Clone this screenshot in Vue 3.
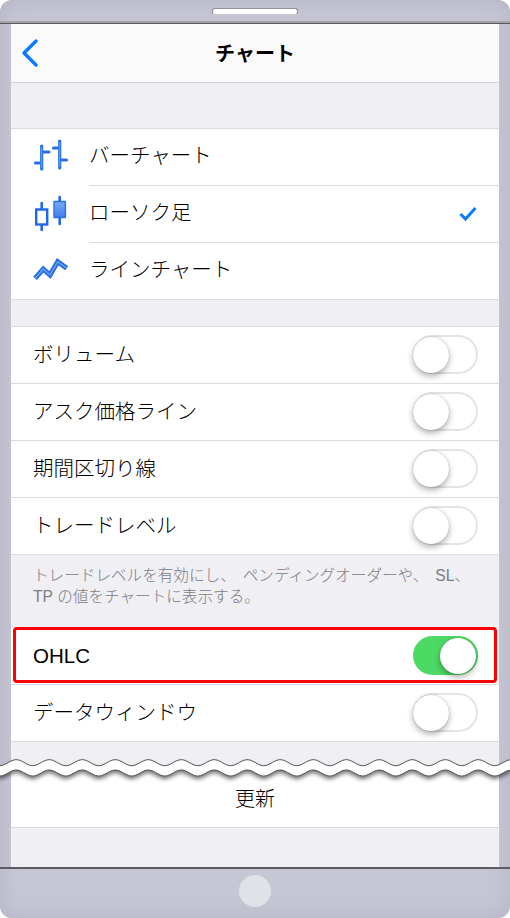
<script setup>
import { computed } from 'vue'

const chartTypes = [
  { label: 'バーチャート', icon: 'bar' },
  { label: 'ローソク足', icon: 'candle', checked: true },
  { label: 'ラインチャート', icon: 'line' }
]
const options = ['ボリューム', 'アスク価格ライン', '期間区切り線', 'トレードレベル']

const PERIOD = 33
const PHASE = 8
const AMP = 3
function samples(center) {
  const pts = []
  for (let x = -2; x <= 512; x += 1.5) {
    const y = center - AMP * Math.sin((2 * Math.PI * (x - PHASE)) / PERIOD)
    pts.push(`${x} ${y.toFixed(2)}`)
  }
  return pts
}
const upper = computed(() => 'M' + samples(7.7).join(' L'))
const lower = computed(() => 'M' + samples(18).join(' L'))
const band = computed(() => 'M' + samples(7.7).join(' L') + ' L' + samples(18).reverse().join(' L') + ' Z')
</script>

<template>
  <div class="device">
    <div class="bezel-top"><div class="speaker"></div></div>
    <div class="screen">
      <header class="nav">
        <svg class="back" width="18" height="28" viewBox="0 0 18 28">
          <path d="M15 2 L3 14 L15 26" fill="none" stroke="#0a7aff" stroke-width="3.4" stroke-linecap="round" stroke-linejoin="round" />
        </svg>
        <h1 class="title">チャート</h1>
      </header>

      <section class="group first">
        <div v-for="t in chartTypes" :key="t.label" class="row icon-row">
          <span class="icon">
            <svg width="40" height="40" viewBox="0 0 40 40">
              <defs>
                <linearGradient id="candleFill" x1="0" y1="0" x2="0" y2="1">
                  <stop offset="0" stop-color="#74aaf6" />
                  <stop offset="1" stop-color="#3f7fea" />
                </linearGradient>
              </defs>
              <template v-if="t.icon === 'bar'">
                <path d="M10.7 8V31M4.5 25H10.7M10.7 14H18M28.7 3V30M22.5 10H28.7M28.7 22H35.5" fill="none" stroke="#2a6ee4" stroke-width="3.2" stroke-linecap="round" />
                <path d="M10.7 9V30M28.7 4V29" fill="none" stroke="#6ba2f3" stroke-width="1" />
              </template>
              <template v-else-if="t.icon === 'candle'">
                <path d="M10.7 8V14M10.7 30V35M28.7 2V6M28.7 23V29" stroke="#1f66ea" stroke-width="2.6" stroke-linecap="round" />
                <rect x="5.2" y="14.5" width="11" height="15" fill="#fff" stroke="#1f66ea" stroke-width="2.4" />
                <rect x="23" y="6.5" width="11.4" height="16" rx="0.5" fill="url(#candleFill)" stroke="#2a6ee4" stroke-width="1.4" />
              </template>
              <template v-else>
                <path d="M4 27.3 L12.3 18 L19 24 L26.7 10.7 L35.7 17.3" fill="none" stroke="#2a6ee4" stroke-width="5" stroke-linejoin="miter" />
                <path d="M4 27.3 L12.3 18 L19 24 L26.7 10.7 L35.7 17.3" fill="none" stroke="#6ba2f3" stroke-width="1.4" stroke-linejoin="miter" />
              </template>
            </svg>
          </span>
          <span class="row-body">
            <span class="label">{{ t.label }}</span>
            <svg v-if="t.checked" class="check" width="18" height="15" viewBox="0 0 18 15">
              <path d="M1.5 8 L6.5 13 L16.5 2" fill="none" stroke="#0a7aff" stroke-width="3" />
            </svg>
          </span>
        </div>
      </section>

      <section class="group second">
        <div v-for="o in options" :key="o" class="row plain">
          <span class="label">{{ o }}</span>
          <span class="switch"><span class="knob"></span></span>
        </div>
      </section>

      <p class="note">トレードレベルを有効にし、<span class="gap">ペンディングオーダーや、</span><span class="gap"><span class="latin">SL</span>、</span><br /><span class="latin">TP</span> の値をチャートに表示する。</p>

      <section class="group">
        <div class="row plain">
          <span class="label latin">OHLC</span>
          <span class="switch on"><span class="knob"></span></span>
        </div>
        <div class="row plain">
          <span class="label">データウィンドウ</span>
          <span class="switch"><span class="knob"></span></span>
        </div>
      </section>

      <div class="spacer"></div>

      <section class="update"><span class="update-label">更新</span></section>
    </div>
    <div class="bezel-bottom"><div class="home"></div></div>

    <div class="highlight"></div>
    <svg class="tear" width="510" height="34" viewBox="0 0 510 34">
      <path :d="band" fill="#fff" class="band" />
      <path :d="upper" fill="none" stroke="#555" stroke-width="1" />
      <path :d="lower" fill="none" stroke="#555" stroke-width="1" />
    </svg>
  </div>
</template>

<style scoped>
.device {
  position: relative;
  width: 510px;
  height: 918px;
  overflow: hidden;
  display: flex;
  flex-direction: column;
  background: #c6c6d4;
  border-radius: 12px;
  box-shadow: inset 0 0 22px #b3b3c5;
  font-family: "Liberation Sans", "Noto Sans CJK JP", sans-serif;
  font-weight: 300;
  color: #000;
}
.latin { font-weight: 400; }
.bezel-top {
  flex: none;
  height: 24px;
  display: flex;
  justify-content: center;
  align-items: flex-start;
  padding-top: 8px;
  box-sizing: border-box;
  border-bottom: 1px solid #58585c;
  box-shadow: inset 0 -2px 0 #a2a2aa;
}
.speaker {
  width: 86px;
  height: 7px;
  box-sizing: border-box;
  background: #fff;
  border: 1px solid #8d8d92;
  border-bottom-color: #c8c8d0;
  border-radius: 3px;
}
.screen {
  flex: none;
  height: 843px;
  margin: 0 11px;
  background: #efeff4;
  display: flex;
  flex-direction: column;
}
.nav {
  flex: none;
  height: 59px;
  box-sizing: border-box;
  background: #fafafa;
  border-bottom: 1px solid #d2d2d6;
  display: flex;
  align-items: center;
  justify-content: center;
  position: relative;
}
.back {
  position: absolute;
  left: 10px;
  top: 15px;
}
.title {
  margin: 0 0 -2px;
  font-size: 20px;
  font-weight: 700;
  line-height: 1;
}
.group {
  flex: none;
  background: #fff;
  border-top: 1px solid #dcdce0;
}
.group.first { margin-top: 45px; }
.group.second { margin-top: 26px; }
.row {
  height: 57px;
  box-sizing: border-box;
}
.plain {
  display: flex;
  align-items: center;
  justify-content: space-between;
  padding: 0 21px 2px 22px;
  border-bottom: 1px solid #dcdce0;
}
.icon-row {
  display: flex;
  align-items: stretch;
}
.icon-row:last-child { border-bottom: 1px solid #dcdce0; }
.icon-row:last-child .row-body { border-bottom: none; }
.icon {
  width: 78px;
  flex: none;
  padding-left: 20px;
  box-sizing: border-box;
  display: flex;
  align-items: center;
}
.row-body {
  flex: 1;
  display: flex;
  align-items: center;
  justify-content: space-between;
  padding-right: 22px;
  border-bottom: 1px solid #dcdce0;
}
.check { margin-bottom: 1px; }
.label {
  font-size: 20.5px;
  line-height: 1;
  margin-bottom: -2px;
}
.row-body .label { margin-bottom: 1px; }
.switch {
  width: 65px;
  height: 39px;
  box-sizing: border-box;
  box-shadow: inset 0 0 0 2px #e4e4e6;
  border-radius: 20px;
  background: #fff;
  display: flex;
  align-items: center;
}
.knob {
  width: 36px;
  height: 36px;
  border-radius: 50%;
  background: #fff;
  margin-top: 1px;
  box-shadow: 0 3px 6px rgba(0, 0, 0, 0.32), 0 0 1px rgba(0, 0, 0, 0.3);
}
.switch.on {
  background: #4cd964;
  box-shadow: none;
  justify-content: flex-end;
  padding-right: 2px;
}
.note {
  flex: none;
  height: 72px;
  box-sizing: border-box;
  margin: 0;
  padding: 10px 22px 0;
  font-size: 15.6px;
  line-height: 21px;
  color: #7c7c82;
}
.gap { margin-left: 7px; }
.spacer {
  flex: none;
  height: 29px;
}
.update {
  flex: none;
  height: 57px;
  box-sizing: border-box;
  background: #fff;
  border-bottom: 1px solid #d8d8dc;
  display: flex;
  align-items: center;
  justify-content: center;
  font-size: 20px;
}
.update-label { margin-bottom: 4px; }
.bezel-bottom {
  flex: none;
  height: 51px;
  box-sizing: border-box;
  border-top: 2px solid #5c5c62;
  display: flex;
  justify-content: center;
  padding-top: 6px;
}
.home {
  width: 32px;
  height: 32px;
  border-radius: 50%;
  background: #e1e2e8;
}
.highlight {
  position: absolute;
  left: 13px;
  top: 627px;
  width: 484px;
  height: 56px;
  box-sizing: border-box;
  border: 3px solid #f00;
  border-radius: 4px;
}
.tear {
  position: absolute;
  left: 0;
  top: 755px;
}
.band {
  filter: drop-shadow(0 3px 2px rgba(0, 0, 0, 0.55));
}
</style>

<style>
html, body { margin: 0; background: #fff; }
</style>
